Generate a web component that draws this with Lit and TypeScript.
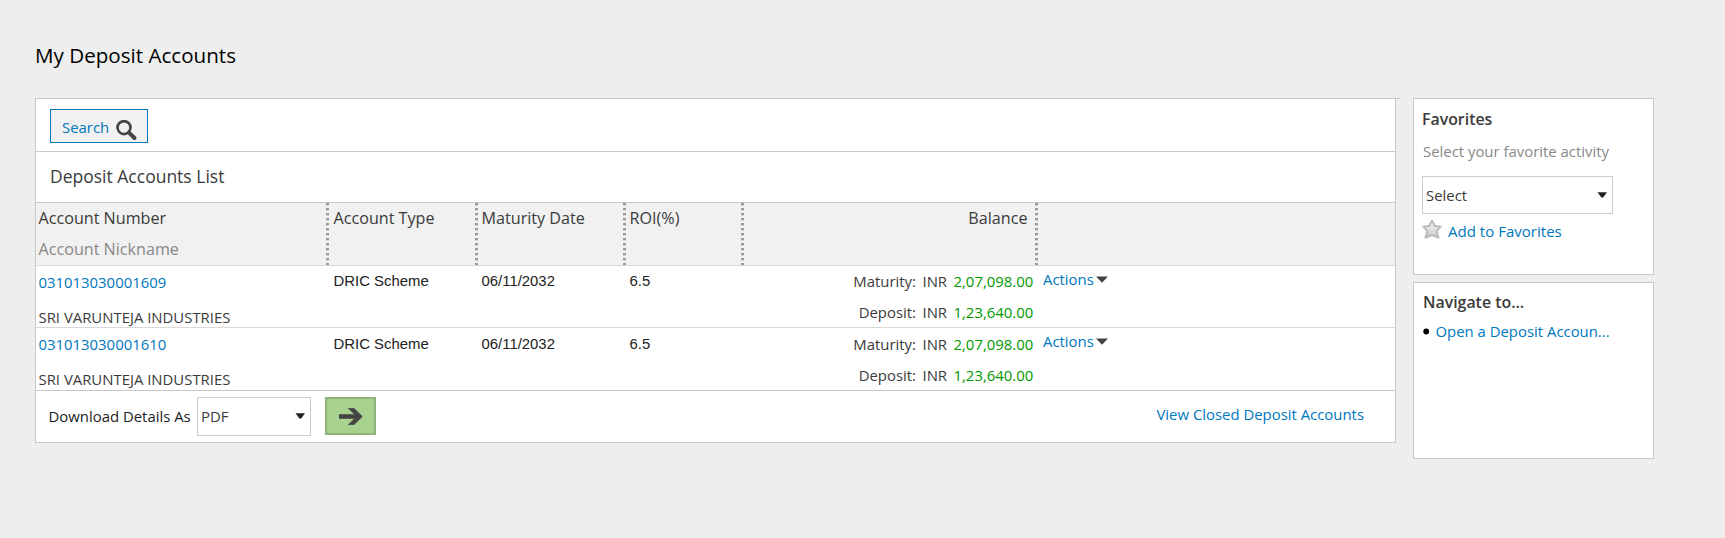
import { LitElement, html, css } from "lit";
import { customElement } from "lit/decorators.js";

interface Account {
  number: string;
  nickname: string;
  type: string;
  maturityDate: string;
  roi: string;
  maturity: string;
  deposit: string;
}

const ACCOUNTS: Account[] = ["031013030001609", "031013030001610"].map((number) => ({
  number,
  nickname: "SRI VARUNTEJA INDUSTRIES",
  type: "DRIC Scheme",
  maturityDate: "06/11/2032",
  roi: "6.5",
  maturity: "2,07,098.00",
  deposit: "1,23,640.00",
}));

const caret = html`<svg class="caret" width="10" height="6" viewBox="0 0 10 6"><path d="M0.5 0.3H10L6.2 5.4H4.4Z" fill="#222" /></svg>`;

@customElement("app-root")
export class AppRoot extends LitElement {
  static styles = css`
    :host { display: block; box-sizing: border-box; width: 1725px; height: 538px; background: #eee; padding: 40px 0 0 35px; font: 14.9px/20px "Open Sans", sans-serif; color: #3b3b3b; overflow: hidden; }
    * { box-sizing: border-box; }
    h1 { margin: 0; height: 58px; font-size: 20.6px; line-height: 30px; font-weight: 400; color: #000; }
    a { color: #0078be; text-decoration: none; }
    .layout { display: flex; gap: 13px; align-items: flex-start; }
    .main { width: 1365px; border-top: 1px solid #c8c8c8; }
    .panel { width: 1361px; background: #fff; border: 1px solid #c8c8c8; border-top: 0; }
    .bar { height: 53px; padding: 10px 0 0 14px; border-bottom: 1px solid #c8c8c8; }
    .search { display: flex; width: 98px; height: 34px; padding: 7px 0 0 11px; gap: 6.5px; border: 1px solid #0078be; background: #f1f1f1; color: #0078be; font: 14.9px/20px "Open Sans", sans-serif; text-align: left; }
    .search svg { margin-top: 3px; }
    h2 { margin: 0; height: 51px; padding: 12px 0 0 14px; border-bottom: 1px solid #c8c8c8; font-size: 17.5px; line-height: 24px; font-weight: 400; }
    .grid { display: grid; grid-template-columns: 293px 149px 148px 118px 294px 1fr; }
    .head { height: 63px; background: #f1f1f1; border-bottom: 1px solid #d9d9d9; font-size: 16.15px; line-height: 31px; }
    .head > div { padding-left: 2.5px; border-right: 3px solid transparent; border-image: repeating-linear-gradient(#999 0 2px, #d4d4d4 2px 3px, #f1f1f1 3px 5px) 0 3 0 0; }
    .head > div:last-child { border: 0; }
    .head .c { padding-left: 4.5px; }
    .head .c + .c { padding-left: 3.5px; }
    .head .bal { text-align: right; padding-right: 7.5px; }
    .nick { color: #888; }
    .row { height: 62px; border-bottom: 1px solid #d9d9d9; }
    .row.last { height: 63px; border-color: #c8c8c8; }
    .row > div { padding-left: 2.5px; }
    .num { padding-top: 6px; }
    .num span { display: block; margin-top: 15px; }
    .row .ar { font: 14.9px/20px "Liberation Sans", sans-serif; color: #222; padding: 5px 0 0 4.5px; }
    .row .ar + .ar { padding-left: 3.5px; }
    .money { display: grid; grid-template-columns: 1fr 24.5px 79px; column-gap: 6.5px; align-content: start; text-align: right; line-height: 31px; padding: 0 5.5px 0 0; }
    .green { color: #090; }
    .row .act { display: flex; gap: 2px; align-items: flex-start; padding: 3px 0 0 5px; }
    .act svg { margin-top: 7px; }
    .row.last .ar { padding-top: 6px; }
    .last .money { padding-top: 1px; }
    .foot { display: flex; height: 51px; padding-left: 12.5px; }
    .foot .lbl { width: 148.5px; padding-top: 15px; color: #222; }
    .select { display: flex; justify-content: space-between; border: 1px solid #ccc; background: #fff; }
    .fmt { width: 114px; height: 39px; margin-top: 6px; padding: 8px 5px 0 3px; }
    .caret { margin-top: 7px; }
    .go { width: 51px; height: 38px; margin: 6px 0 0 14px; padding: 0 0 0 12px; border: 2px solid #8cb37a; background: #a9d18e; }
    .go svg { display: block; }
    .closed { margin: 13px 31px 0 auto; }
    .side { width: 241px; display: grid; gap: 7px; }
    .card { background: #fff; border: 1px solid #c8c8c8; height: 177px; padding-left: 8px; }
    h3 { margin: 0; font-size: 15.9px; line-height: 22px; font-weight: 600; }
    .fav { padding-top: 9px; }
    .hint { color: #888; margin: 11px 0 0 1px; }
    .pick { width: 191px; height: 38px; margin-top: 15px; padding: 8px 5px 0 3px; }
    .add { display: flex; gap: 6px; margin-top: 5px; font-size: 15.05px; }
    .add a { margin-top: 2px; }
    .nav { padding: 8px 0 0 9px; }
    .item { display: flex; gap: 5.5px; margin-top: 8px; align-items: flex-start; }
    .item svg { margin-top: 7px; }
  `;

  private row(a: Account, last: boolean) {
    return html`<div class="grid row ${last ? "last" : ""}">
      <div class="num"><a>${a.number}</a><span>${a.nickname}</span></div>
      <div class="ar">${a.type}</div>
      <div class="ar">${a.maturityDate}</div>
      <div class="ar">${a.roi}</div>
      <div class="money">
        <span>Maturity:</span><span>INR</span><span class="green">${a.maturity}</span>
        <span>Deposit:</span><span>INR</span><span class="green">${a.deposit}</span>
      </div>
      <div class="act"><a>Actions</a><svg width="12" height="7" viewBox="0 0 12 7"><path d="M0 0.5H12L6 6.8Z" fill="#444" /></svg></div>
    </div>`;
  }

  render() {
    return html`
      <h1>My Deposit Accounts</h1>
      <div class="layout">
        <div class="main"><div class="panel">
          <div class="bar"><button class="search"><span>Search</span><svg width="21" height="21" viewBox="0 0 21 21" fill="none" stroke="#444"><circle cx="8" cy="7.6" r="6.5" stroke-width="2.6" /><path d="M13 12.6L18.4 18" stroke-width="4" stroke-linecap="round" /></svg></button></div>
          <h2>Deposit Accounts List</h2>
          <div class="grid head">
            <div>Account Number<div class="nick">Account Nickname</div></div>
            <div class="c">Account Type</div><div class="c">Maturity Date</div><div class="c">ROI(%)</div>
            <div class="bal">Balance</div><div></div>
          </div>
          ${ACCOUNTS.map((a, i) => this.row(a, i === ACCOUNTS.length - 1))}
          <div class="foot">
            <span class="lbl">Download Details As</span>
            <div class="select fmt"><span>PDF</span>${caret}</div>
            <button class="go"><svg width="26" height="34" viewBox="0 0 26 34"><path d="M9.5 9.5H15L23.3 17.5L15 25.5H9.5L16 19.5V15.5Z" fill="#444" stroke="#444" stroke-width="0.8" /><path d="M0 17.5H20" stroke="#444" stroke-width="4.6" /></svg></button>
            <a class="closed">View Closed Deposit Accounts</a>
          </div>
        </div></div>
        <div class="side">
          <div class="card fav">
            <h3>Favorites</h3>
            <div class="hint">Select your favorite activity</div>
            <div class="select pick"><span>Select</span>${caret}</div>
            <div class="add"><svg width="20" height="20" viewBox="0 0 20 20">
              <defs><linearGradient id="s" x1="0" y1="0" x2="0" y2="1"><stop offset="0" stop-color="#f4f4f4" /><stop offset="1" stop-color="#ccc" /></linearGradient></defs>
              <path d="M10 1L13 6.6L19.4 7.3L15.2 12L16.8 19.2L10 16.4L3.2 19.2L4.8 12L0.6 7.3L7 6.6Z" fill="url(#s)" stroke="#d0d0d0" stroke-width="1.8" stroke-linejoin="round" />
              <path d="M10 2L12.6 7.2L18.2 8L14.2 12.2L15.8 18.2L10 15.4L4.2 18.2L5.8 12.2L1.8 8L7.4 7.2Z" fill="none" stroke="#aaa" stroke-width="1" stroke-linejoin="round" /></svg>
              <a>Add to Favorites</a></div>
          </div>
          <div class="card nav">
            <h3>Navigate to...</h3>
            <div class="item"><svg width="7" height="7"><circle cx="3.2" cy="3.5" r="2.9" fill="#000" /></svg><a>Open a Deposit Accoun...</a></div>
          </div>
        </div>
      </div>`;
  }
}
